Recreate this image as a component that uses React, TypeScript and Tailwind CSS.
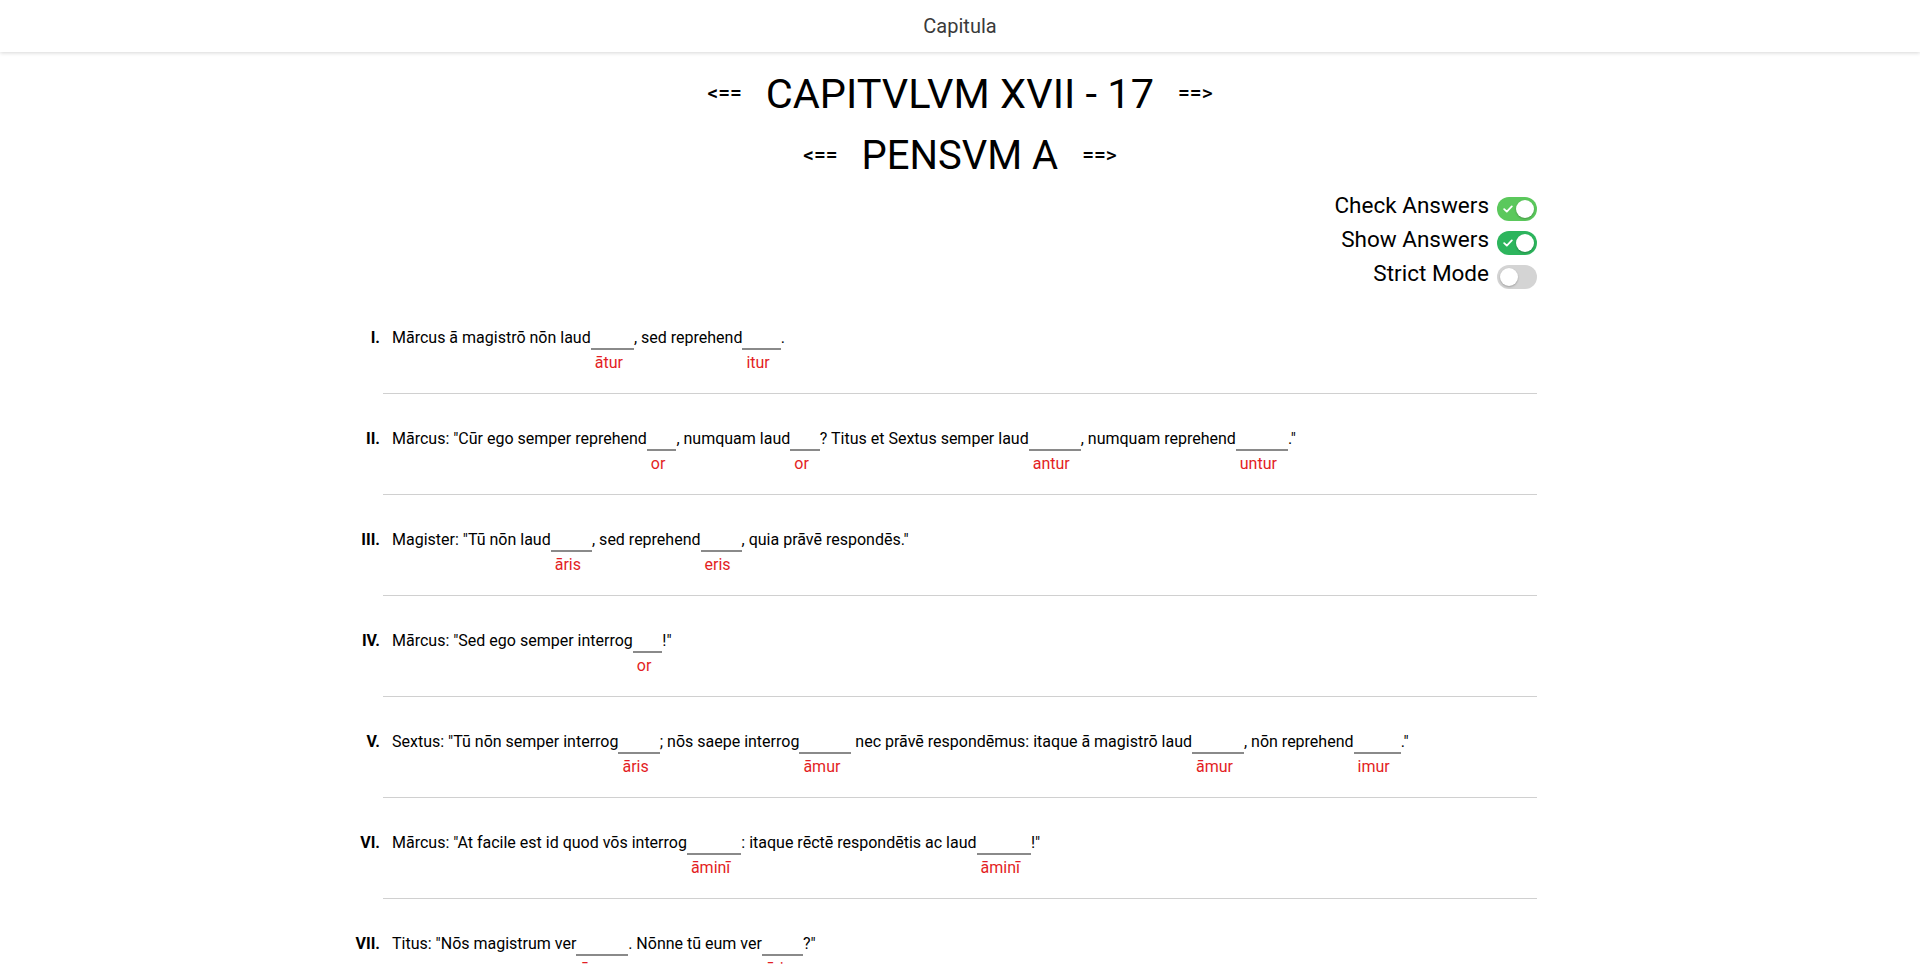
import React from "react";

type Part = string | { a: string };
type Item = { n: string; parts: Part[] };

const items: Item[] = [
  { n: "I.", parts: ["Mārcus ā magistrō nōn laud", { a: "ātur" }, ", sed reprehend", { a: "itur" }, "."] },
  {
    n: "II.",
    parts: [
      'Mārcus: "Cūr ego semper reprehend',
      { a: "or" },
      ", numquam laud",
      { a: "or" },
      "? Titus et Sextus semper laud",
      { a: "antur" },
      ", numquam reprehend",
      { a: "untur" },
      '."',
    ],
  },
  {
    n: "III.",
    parts: ['Magister: "Tū nōn laud', { a: "āris" }, ", sed reprehend", { a: "eris" }, ', quia prāvē respondēs."'],
  },
  { n: "IV.", parts: ['Mārcus: "Sed ego semper interrog', { a: "or" }, '!"'] },
  {
    n: "V.",
    parts: [
      'Sextus: "Tū nōn semper interrog',
      { a: "āris" },
      "; nōs saepe interrog",
      { a: "āmur" },
      " nec prāvē respondēmus: itaque ā magistrō laud",
      { a: "āmur" },
      ", nōn reprehend",
      { a: "imur" },
      '."',
    ],
  },
  {
    n: "VI.",
    parts: [
      'Mārcus: "At facile est id quod vōs interrog',
      { a: "āminī" },
      ": itaque rēctē respondētis ac laud",
      { a: "āminī" },
      '!"',
    ],
  },
  { n: "VII.", parts: ['Titus: "Nōs magistrum ver', { a: "ēmur" }, ". Nōnne tū eum ver", { a: "ēris" }, '?"'] },
];

function Toggle({ on, color }: { on: boolean; color?: string }) {
  if (!on) {
    return (
      <div className="w-[40px] h-[24px] rounded-full bg-[#d4d4d4] flex items-center px-[3px]">
        <div className="w-[18px] h-[18px] rounded-full bg-white shadow-[0_1px_2px_rgba(0,0,0,0.25)]" />
      </div>
    );
  }
  return (
    <div className={`w-[40px] h-[24px] rounded-full flex items-center justify-between px-[3px] ${color}`}>
      <svg width="10" height="8" viewBox="0 0 10 8" className="ml-[3px]">
        <path d="M1.2 4.2 L3.8 6.6 L8.8 1.4" fill="none" stroke="white" strokeWidth="1.8" strokeLinecap="round" strokeLinejoin="round" />
      </svg>
      <div className="w-[18px] h-[18px] rounded-full bg-white shadow-[0_1px_2px_rgba(0,0,0,0.25)]" />
    </div>
  );
}

function Blank({ a }: { a: string }) {
  return (
    <span className="flex flex-col">
      <span className="h-[24px] border-b-2 border-[#8a8a8a]" />
      <span className="h-[25px] leading-[25px] pl-[4px] pr-[11px] text-[#e31e24]">{a}</span>
    </span>
  );
}

function ToggleRow({ label, children }: { label: string; children: React.ReactNode }) {
  return (
    <div className="h-[34px] flex items-center gap-[8px]">
      <span className="text-[22.5px] leading-[26px] pb-[9px]">{label}</span>
      {children}
    </div>
  );
}

export default function App() {
  return (
    <div className="h-screen overflow-hidden bg-white text-black font-[Roboto,'Liberation_Sans',sans-serif] flex flex-col">
      <header className="h-[52px] shrink-0 flex items-center justify-center bg-white shadow-[0_1px_4px_rgba(0,0,0,0.16)] relative z-10">
        <span className="text-[20px] text-[#3a3a3a]">Capitula</span>
      </header>
      <main className="flex-1 overflow-hidden">
        <div className="w-[1154px] mx-auto">
          <div className="mt-[18px] h-[48px] flex items-center justify-center gap-[24px]">
            <span className="text-[21px] font-medium">&lt;==</span>
            <h1 className="text-[41.5px] leading-[48px] font-normal">CAPITVLVM XVII - 17</h1>
            <span className="text-[21px] font-medium">==&gt;</span>
          </div>
          <div className="mt-[14px] h-[48px] flex items-center justify-center gap-[24px]">
            <span className="text-[21px] font-medium">&lt;==</span>
            <h2 className="text-[40px] leading-[48px] font-normal">PENSVM A</h2>
            <span className="text-[21px] font-medium">==&gt;</span>
          </div>
          <div className="mt-[12px] flex flex-col items-end">
            <ToggleRow label="Check Answers">
              <Toggle on color="bg-[#5bc85c]" />
            </ToggleRow>
            <ToggleRow label="Show Answers">
              <Toggle on color="bg-[#2db55d]" />
            </ToggleRow>
            <ToggleRow label="Strict Mode">
              <Toggle on={false} />
            </ToggleRow>
          </div>
          <ol className="mt-[-1px]">
            {items.map((it) => (
              <li key={it.n} className="pt-[33px] pb-[18px] border-b border-[#d0d0d0] flex items-start text-[16px]">
                <span className="w-[48px] ml-[-51px] mr-[12px] text-right font-bold leading-[24px] shrink-0">{it.n}</span>
                <div className="flex items-start">
                  {it.parts.map((p, i) =>
                    typeof p === "string" ? (
                      <span key={i} className="whitespace-pre leading-[24px]">
                        {p}
                      </span>
                    ) : (
                      <Blank key={i} a={p.a} />
                    )
                  )}
                </div>
              </li>
            ))}
          </ol>
        </div>
      </main>
    </div>
  );
}
